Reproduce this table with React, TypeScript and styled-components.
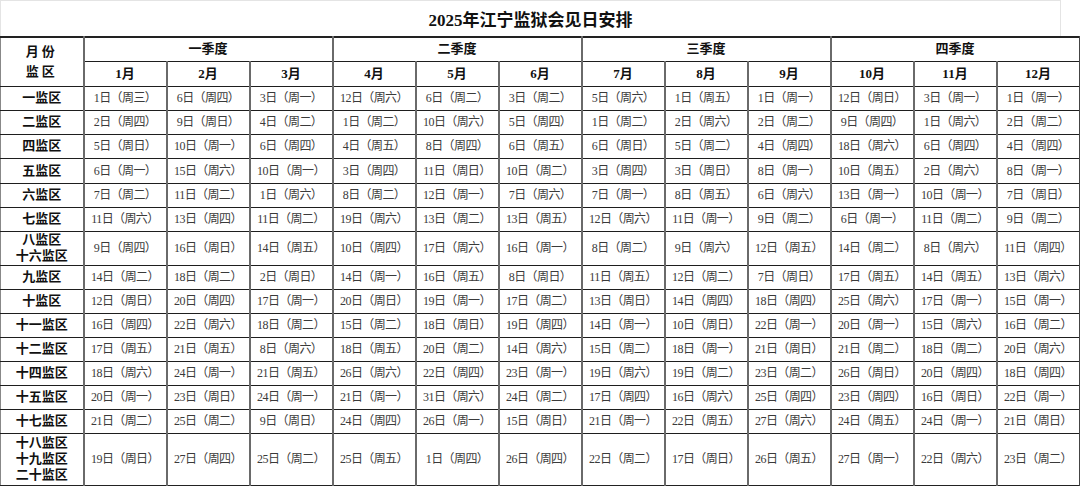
import React from 'react';
import styled, { createGlobalStyle } from 'styled-components';

const GlobalStyle = createGlobalStyle`
  html, body {
    margin: 0;
    padding: 0;
    background: #ffffff;
  }
  body {
    font-family: "Liberation Serif", "Noto Sans CJK SC", serif;
    color: #222;
  }
`;

const Page = styled.div`
  width: 1080px;
  height: 486px;
  overflow: hidden;
  background: #fff;
`;

const TitleBar = styled.div`
  width: 1061px;
  height: 36px;
  border-top: 1px solid #e4e4e4;
  border-left: 1px solid #e4e4e4;
  border-right: 1px solid #e4e4e4;
  display: flex;
  align-items: center;
  justify-content: center;
  box-sizing: border-box;
`;

const Title = styled.h1`
  margin: 0;
  font-size: 17px;
  font-weight: 700;
  color: #111;
`;

const Table = styled.table`
  width: 1079px;
  table-layout: fixed;
  border-collapse: collapse;
  border-top: 2px solid #222;
  border-bottom: 2px solid #222;
`;

const Cell = styled.td<{ $head?: boolean; $h?: number }>`
  height: ${p => (p.$h ? p.$h - 1 : 23)}px;
  padding: 0;
  text-align: center;
  vertical-align: middle;
  border-left: 2px solid #6a6a6a;
  border-right: 2px solid #6a6a6a;
  border-top: 1px solid #1e1e1e;
  border-bottom: 1px solid #1e1e1e;
  font-size: ${p => (p.$head ? 13 : 12)}px;
  font-weight: ${p => (p.$head ? 700 : 400)};
  color: ${p => (p.$head ? '#111' : '#3a3a3a')};
  line-height: 1.25;
  white-space: nowrap;
  overflow: hidden;
  &:first-child {
    border-left: 1px solid #888;
  }
  &:last-child {
    border-right: 2px solid #444;
  }
`;

const CornerText = styled.span`
  display: block;
  letter-spacing: 3px;
  line-height: 1.55;
`;

const DateText = styled.span`
  letter-spacing: -0.6px;
`;

const quarters = ['一季度', '二季度', '三季度', '四季度'];
const months = Array.from({ length: 12 }, (_, i) => `${i + 1}月`);

type Row = { names: string[]; height: number; data: string };

const rows: Row[] = [
  { names: ['一监区'], height: 24, data: '1三 6四 3一 12六 6二 3二 5六 1五 1一 12日 3一 1一' },
  { names: ['二监区'], height: 24, data: '2四 9日 4二 1二 10六 5四 1二 2六 2二 9四 1六 2二' },
  { names: ['四监区'], height: 24, data: '5日 10一 6四 4五 8四 6五 6日 5二 4四 18六 6四 4四' },
  { names: ['五监区'], height: 25, data: '6一 15六 10一 3四 11日 10二 3四 3日 8一 10五 2六 8一' },
  { names: ['六监区'], height: 24, data: '7二 11二 1六 8二 12一 7六 7一 8五 6六 13一 10一 7日' },
  { names: ['七监区'], height: 24, data: '11六 13四 11二 19六 13二 13五 12六 11一 9二 6一 11二 9二' },
  { names: ['八监区', '十六监区'], height: 33, data: '9四 16日 14五 10四 17六 16一 8二 9六 12五 14二 8六 11四' },
  { names: ['九监区'], height: 24, data: '14二 18二 2日 14一 16五 8日 11五 12二 7日 17五 14五 13六' },
  { names: ['十监区'], height: 24, data: '12日 20四 17一 20日 19一 17二 13日 14四 18四 25六 17一 15一' },
  { names: ['十一监区'], height: 24, data: '16四 22六 18二 15二 18日 19四 14一 10日 22一 20一 15六 16二' },
  { names: ['十二监区'], height: 24, data: '17五 21五 8六 18五 20二 14六 15二 18一 21日 21二 18二 20六' },
  { names: ['十四监区'], height: 24, data: '18六 24一 21五 26六 22四 23一 19六 19二 23二 26日 20四 18四' },
  { names: ['十五监区'], height: 24, data: '20一 23日 24一 21一 31六 24二 17四 16六 25四 23四 16日 22一' },
  { names: ['十七监区'], height: 24, data: '21二 25二 9日 24四 26一 15日 21一 22五 27六 24五 24一 21日' },
  { names: ['十八监区', '十九监区', '二十监区'], height: 52, data: '19日 27四 25二 25五 1四 26四 22二 17日 26五 27一 22六 23二' },
];

const formatDate = (token: string) => {
  const day = token.slice(0, -1);
  const wd = token.slice(-1);
  return `${day}日（周${wd}）`;
};

const App: React.FC = () => {
  return (
    <Page>
      <GlobalStyle />
      <TitleBar>
        <Title>2025年江宁监狱会见日安排</Title>
      </TitleBar>
      <Table>
        <colgroup>
          {Array.from({ length: 13 }, (_, i) => (
            <col key={i} style={{ width: 83 }} />
          ))}
        </colgroup>
        <thead>
          <tr>
            <Cell as="th" $head rowSpan={2}>
              <CornerText>月份</CornerText>
              <CornerText>监区</CornerText>
            </Cell>
            {quarters.map(q => (
              <Cell as="th" $head colSpan={3} key={q}>
                {q}
              </Cell>
            ))}
          </tr>
          <tr>
            {months.map(m => (
              <Cell as="th" $head $h={25} key={m}>
                {m}
              </Cell>
            ))}
          </tr>
        </thead>
        <tbody>
          {rows.map(row => (
            <tr key={row.names.join()}>
              <Cell $head $h={row.height}>
                {row.names.map(n => (
                  <div key={n}>{n}</div>
                ))}
              </Cell>
              {row.data.split(' ').map((t, i) => (
                <Cell $h={row.height} key={i}>
                  <DateText>{formatDate(t)}</DateText>
                </Cell>
              ))}
            </tr>
          ))}
        </tbody>
      </Table>
    </Page>
  );
};

export default App;
